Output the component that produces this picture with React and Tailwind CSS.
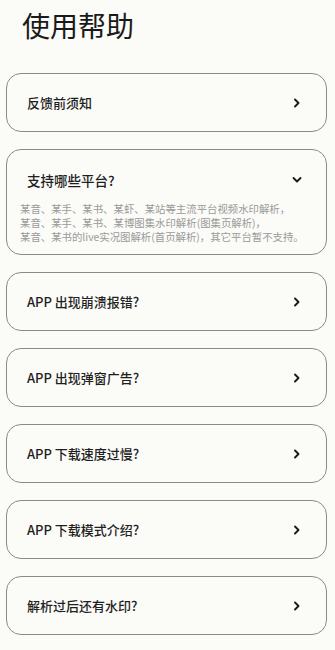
const items = [
  "反馈前须知",
  null,
  "APP 出现崩溃报错?",
  "APP 出现弹窗广告?",
  "APP 下载速度过慢?",
  "APP 下载模式介绍?",
  "解析过后还有水印?",
];

function ChevronRight() {
  return (
    <svg width="8" height="10" viewBox="0 0 8 10" fill="none">
      <path d="M2 1.5 L5.5 5 L2 8.5" stroke="#1a1a1a" strokeWidth="1.9" strokeLinecap="round" strokeLinejoin="round" />
    </svg>
  );
}

function ChevronDown() {
  return (
    <svg width="10" height="8" viewBox="0 0 10 8" fill="none">
      <path d="M1.5 2 L5 5.5 L8.5 2" stroke="#1a1a1a" strokeWidth="1.9" strokeLinecap="round" strokeLinejoin="round" />
    </svg>
  );
}

export default function App() {
  const font = { fontFamily: '"Noto Sans CJK SC", "Noto Sans", sans-serif' };
  return (
    <div className="w-[335px] min-h-[650px] bg-[#fbfbf7] text-[#1f1f1f]" style={font}>
      <div className="pt-[8px] pl-[22px] text-[28px] leading-[34px] font-normal text-[#1a1a1a]">使用帮助</div>
      <div className="mt-[31px] px-[6px] flex flex-col gap-[17px]">
        {items.map((t, i) =>
          t === null ? (
            <div key={i} className="w-[321px] rounded-[15px] border border-[#8a8a8a] pt-[21px] pb-[10px]">
              <div className="flex items-center justify-between pl-[20px] pr-[24px] h-[18px]">
                <span className="text-[13.5px] font-medium leading-[18px]">支持哪些平台?</span>
                <ChevronDown />
              </div>
              <div className="mt-[13px] pl-[13px] text-[10.4px] leading-[14px] text-[#9a9a9a]">
                <div>某音、某手、某书、某虾、某站等主流平台视频水印解析，</div>
                <div>某音、某手、某书、某博图集水印解析(图集页解析)，</div>
                <div>某音、某书的live实况图解析(首页解析)，其它平台暂不支持。</div>
              </div>
            </div>
          ) : (
            <div key={i} className="w-[321px] h-[59px] rounded-[15px] border border-[#8a8a8a] flex items-center justify-between pl-[20px] pr-[25px]">
              <span className="text-[13px] font-medium leading-[18px]">{t}</span>
              <ChevronRight />
            </div>
          )
        )}
      </div>
    </div>
  );
}
